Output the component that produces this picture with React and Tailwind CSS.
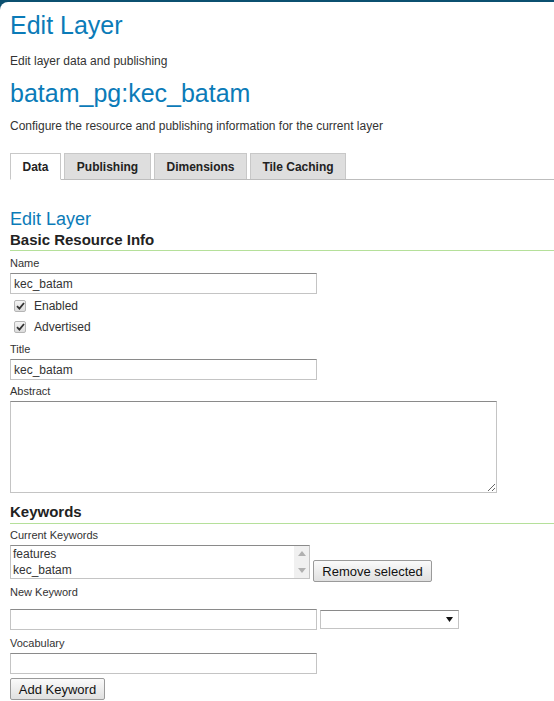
import React from "react";

function Label({ children, mt }) {
  return <div className={`${mt} text-[11px] leading-[13px] text-[#333]`}>{children}</div>;
}

function Check({ label, mt = "" }) {
  return (
    <div className={`${mt} flex items-center h-[21px] pl-[4px]`}>
      <span className="w-[12px] h-[12px] border border-[#b5b5b5] rounded-[2px] bg-gradient-to-b from-[#f4f4f4] to-[#dcdcdc] flex items-center justify-center">
        <svg width="9" height="8" viewBox="0 0 9 8">
          <path d="M1 4.2 L3.4 6.6 L8 1" stroke="#333" strokeWidth="1.8" fill="none" />
        </svg>
      </span>
      <span className="ml-[8px] text-[12px] text-[#333]">{label}</span>
    </div>
  );
}

function TextInput({ value, mt = "" }) {
  return (
    <input
      readOnly
      value={value}
      className={`${mt} block w-[307px] h-[21px] border border-[#c4c4c4] border-t-[#8a8a8a] bg-white px-[3px] text-[12px] text-[#333] outline-none`}
      style={{ fontFamily: "'Liberation Sans', Arial, sans-serif" }}
    />
  );
}

function Button({ children, w, mt = "" }) {
  return (
    <button
      className={`${mt} ${w} block h-[22px] border border-[#9a9a9a] rounded-[2px] bg-gradient-to-b from-[#fafafa] to-[#e0e0e0] text-[13px] text-[#111] leading-none px-[6px]`}
      style={{ fontFamily: "'Liberation Sans', Arial, sans-serif" }}
    >
      {children}
    </button>
  );
}

export default function App() {
  const tabs = [
    { t: "Data", w: "w-[51px]", active: true },
    { t: "Publishing", w: "w-[87px]" },
    { t: "Dimensions", w: "w-[93px]" },
    { t: "Tile Caching", w: "w-[96px]" },
  ];
  return (
    <div
      className="w-[554px] h-[701px] bg-[#0b5070] pt-[2px] overflow-hidden"
      style={{ fontFamily: "'Liberation Sans', Arial, sans-serif" }}
    >
      <div className="bg-white rounded-tl-[8px] h-[699px] pl-[10px]">
        <h1 className="text-[25px] leading-[30px] text-[#0b7bb8] pt-[8px]">Edit Layer</h1>
        <p className="text-[12px] leading-[14px] text-[#333] mt-[14px]">Edit layer data and publishing</p>
        <h1 className="text-[25px] leading-[30px] text-[#0b7bb8] mt-[10px]">batam_pg:kec_batam</h1>
        <p className="text-[12px] leading-[14px] text-[#333] mt-[11px]">
          Configure the resource and publishing information for the current layer
        </p>

        <div className="flex items-end mt-[21px] border-b border-[#bdbdbd] h-[26px]">
          {tabs.map((tab, i) => (
            <div
              key={tab.t}
              className={`${tab.w} ${i > 0 ? "ml-[3px]" : ""} h-[26px] flex items-center justify-center text-[12px] font-bold text-[#222] border border-[#c8c8c8] ${
                tab.active ? "bg-white border-b-white h-[27px] -mb-[1px]" : "bg-[#dedede] border-b-0"
              }`}
            >
              {tab.t}
            </div>
          ))}
        </div>

        <h2 className="text-[18px] leading-[20px] text-[#0b7bb8] mt-[29px]">Edit Layer</h2>
        <h3 className="text-[15px] leading-[18px] font-bold text-[#222] mt-[2px] border-b border-[#b5e09a] pb-[1px]">
          Basic Resource Info
        </h3>

        <Label mt="mt-[6px]">Name</Label>
        <TextInput value="kec_batam" mt="mt-[3px]" />
        <Check label="Enabled" mt="mt-[1px]" />
        <Check label="Advertised" />
        <Label mt="mt-[6px]">Title</Label>
        <TextInput value="kec_batam" mt="mt-[3px]" />
        <Label mt="mt-[5px]">Abstract</Label>
        <textarea
          readOnly
          className="block mt-[3px] w-[487px] h-[92px] border border-[#c4c4c4] border-t-[#8a8a8a] outline-none"
        />

        <h3 className="text-[15px] leading-[18px] font-bold text-[#222] mt-[10px] border-b border-[#b5e09a] pb-[2px]">
          Keywords
        </h3>
        <Label mt="mt-[5px]">Current Keywords</Label>
        <div className="flex items-start mt-[3px]">
          <div className="w-[300px] h-[34px] border border-[#c4c4c4] border-t-[#8a8a8a] flex bg-white">
            <div className="flex-1 text-[12px] leading-[16px] text-[#333] pl-[2px]">
              <div>features</div>
              <div>kec_batam</div>
            </div>
            <div className="w-[15px] bg-[#f0f0f0] flex flex-col justify-between items-center py-[5px]">
              <svg width="8" height="5" viewBox="0 0 8 5"><path d="M0 5 L4 0 L8 5Z" fill="#b0b0b0" /></svg>
              <svg width="8" height="5" viewBox="0 0 8 5"><path d="M0 0 L4 5 L8 0Z" fill="#b0b0b0" /></svg>
            </div>
          </div>
          <div className="ml-[3px] mt-[15px]">
            <Button w="w-[119px]">Remove selected</Button>
          </div>
        </div>
        <Label mt="mt-[4px]">New Keyword</Label>
        <div className="flex items-center mt-[10px]">
          <TextInput value="" />
          <div className="ml-[3px] w-[139px] h-[19px] border border-[#c4c4c4] border-t-[#8a8a8a] bg-white flex items-center justify-end pr-[5px]">
            <svg width="7" height="5" viewBox="0 0 7 5"><path d="M0 0 L7 0 L3.5 5Z" fill="#111" /></svg>
          </div>
        </div>
        <Label mt="mt-[7px]">Vocabulary</Label>
        <TextInput value="" mt="mt-[3px]" />
        <Button w="w-[95px]" mt="mt-[4px]">Add Keyword</Button>
      </div>
    </div>
  );
}
